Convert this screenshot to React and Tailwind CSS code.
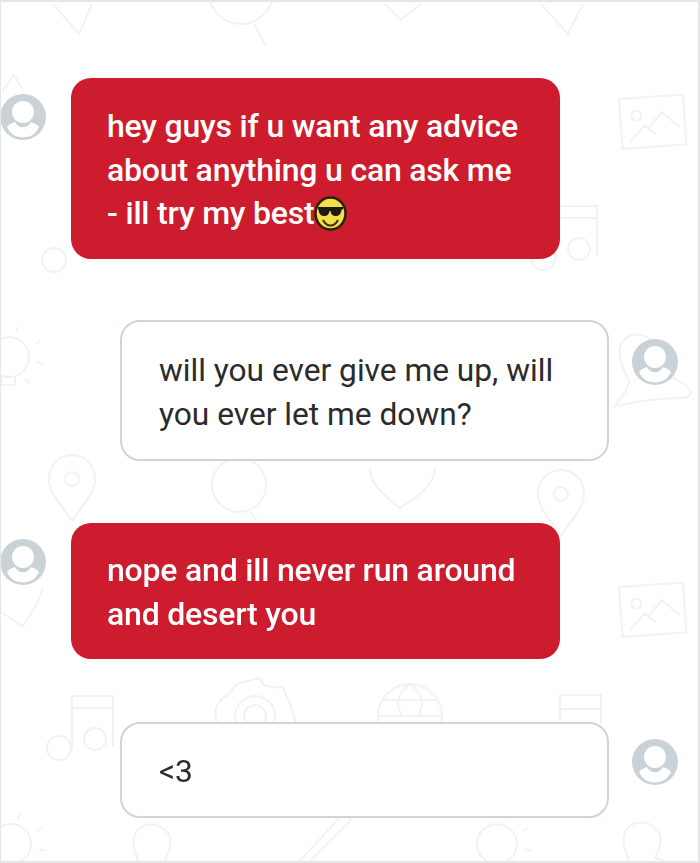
import React from 'react';

function Avatar({ className }) {
  return (
    <svg className={className} width="46" height="46" viewBox="0 0 46 46" fill="none">
      <circle cx="23" cy="23" r="23" fill="#c9d2d7" />
      <circle cx="23" cy="18" r="11" fill="#ffffff" />
      <path d="M7 33C9 30 13 29 15 28C18 35 28 35 31 28C33 29 37 30 39 33C36 40 30 43.500 23 43.500C16 43.500 10 40 7 33Z" fill="#ffffff" />
    </svg>
  );
}

function Shades() {
  return (
    <svg className="inline-block align-middle mt-[-4px]" width="33" height="35" viewBox="0 0 33 35">
      <ellipse cx="16.500" cy="17.500" rx="15" ry="16" fill="#f4df4a" stroke="#2a220a" strokeWidth="2.500" />
      <path d="M4 11h25v2l-1.500 1c-.5 4-2.500 6-5.500 6-3.500 0-5-2-5.500-5h-1c-.5 3-2 5-5.500 5-3 0-5-2-5.500-6L4 13z" fill="#1d1a14" />
      <path d="M9 24c2 4 4.500 5.500 7.500 5.500S22 28 24 24" fill="none" stroke="#3a2c0c" strokeWidth="2" />
    </svg>
  );
}

function Pin({ x, y }) {
  return (
    <g transform={`translate(${x} ${y})`}>
      <path d="M24 66C12 48 1 38 1 24 1 10 11 0 24 0s23 10 23 24c0 14-11 24-23 42z" />
      <circle cx="24" cy="24" r="7" />
    </g>
  );
}

function Picture({ x, y }) {
  return (
    <g transform={`translate(${x} ${y}) rotate(-4)`}>
      <rect x="0" y="0" width="64" height="50" />
      <circle cx="16" cy="18" r="5" />
      <path d="M8 44l16-16 10 10M28 30l14-14 16 16" />
    </g>
  );
}

function Note({ x, y }) {
  return (
    <g transform={`translate(${x} ${y})`}>
      <path d="M30 1h41v12H30zM30 13v41M71 13v38" />
      <circle cx="17" cy="53" r="12" />
      <circle cx="53" cy="44" r="11" />
    </g>
  );
}

function Bulb({ x, y }) {
  return (
    <g transform={`translate(${x} ${y})`}>
      <circle cx="0" cy="0" r="20" />
      <path d="M-8 18v10h14v-9M9-30l-2 5M26-13l5-3M28 5l6 2M16 22l5 4" />
    </g>
  );
}

function People({ x, y }) {
  return (
    <g transform={`translate(${x} ${y})`}>
      <path d="M0 72c6-10 14-16 14-26C6 32 2 20 6 10 12-2 28-2 36 6c8 6 6 18 0 30 12 4 34 10 40 22 0 4-4 6-10 6-20 0-46 4-66 8z" />
    </g>
  );
}

// faint doodles that sit behind the chat
function Doodles() {
  return (
    <svg className="absolute inset-0" width="700" height="863" viewBox="0 0 700 863" fill="none" stroke="#f0f2f4" strokeWidth="2">
      <path d="M52 2l26 30 13-30" />
      <circle cx="240" cy="-10" r="32" />
      <path d="M253 22l12 22" />
      <path d="M384 2l16 16 20-16" />
      <path d="M540 2l27 30 15-30" />
      <path d="M1 90l12-17 8 14" />
      <Picture x={618} y={97} />
      <Note x={525} y={203} />
      <circle cx="53" cy="258" r="12" />
      <Bulb x={8} y={355} />
      <People x={614} y={332} />
      <Pin x={47} y={453} />
      <circle cx="238" cy="483" r="27" />
      <path d="M250 510l6 9" />
      <path d="M369 465c0 18 14 28 30 41 16-10 35-22 35-41" />
      <Pin x={536} y={468} />
      <path d="M0 610l22 14 14-22 6-16" />
      <Picture x={618} y={585} />
      <Note x={41} y={693} />
      <path d="M216 722c-4-14 0-24 10-28l10-12 22-6 6 8 18 2 8 18 5 18" />
      <circle cx="254" cy="714" r="20" />
      <circle cx="254" cy="714" r="11" />
      <circle cx="409" cy="714" r="32" />
      <path d="M377 714h64M409 682c-14 10-14 22-8 32M409 682c14 10 14 22 8 32M382 698h54" />
      <path d="M559 722v-29h41v29M559 707h41" />
      <Bulb x={10} y={842} />
      <People x={128} y={822} />
      <path d="M296 862l46-50 8 6-46 46M306 862l42-42" />
      <Bulb x={496} y={842} />
      <People x={618} y={820} />
    </svg>
  );
}

export default function App() {
  const red = 'w-[489px] rounded-[20px] bg-[#cd1c2d] pl-[36px] text-[32px] leading-[43.5px] font-medium text-white tracking-[-0.2px]';
  const light = 'w-[489px] rounded-[20px] border-2 border-[#ccd6da] bg-white pl-[37px] text-[31.7px] leading-[43.5px] text-[#2b2b2b]';

  return (
    <div className="relative h-[863px] w-[700px] overflow-hidden border-t-2 border-r-2 border-b-2 border-l border-[#e4e7e9] bg-white font-['Roboto',sans-serif]">
      <div className="blur-[0.6px]">
        <Doodles />
        <div className="relative flex flex-col pt-[76px]">
          <div className="flex items-start gap-[25px]">
            <Avatar className="mt-[16px] shrink-0 ml-[-1px]" />
            <div className={`${red} h-[181px] pt-[27px]`}>
              hey guys if u want any advice
              <br />
              about anything u can ask me
              <br />
              - ill try my best<Shades />
            </div>
          </div>

          <div className="mt-[61px] flex items-start gap-[23px] pl-[119px]">
            <div className={`${light} h-[141px] pt-[27px]`}>
              will you ever give me up, will
              <br />
              you ever let me down?
            </div>
            <Avatar className="mt-[19px] shrink-0" />
          </div>

          <div className="mt-[62px] flex items-start gap-[25px]">
            <Avatar className="mt-[16px] shrink-0 ml-[-1px]" />
            <div className={`${red} h-[136px] pt-[26px]`}>
              nope and ill never run around
              <br />
              and desert you
            </div>
          </div>

          <div className="mt-[63px] flex items-start gap-[23px] pl-[119px]">
            <div className={`${light} h-[96px] pt-[26px] text-[24px]`}>&lt;3</div>
            <Avatar className="mt-[17px] shrink-0" />
          </div>
        </div>
      </div>
    </div>
  );
}
